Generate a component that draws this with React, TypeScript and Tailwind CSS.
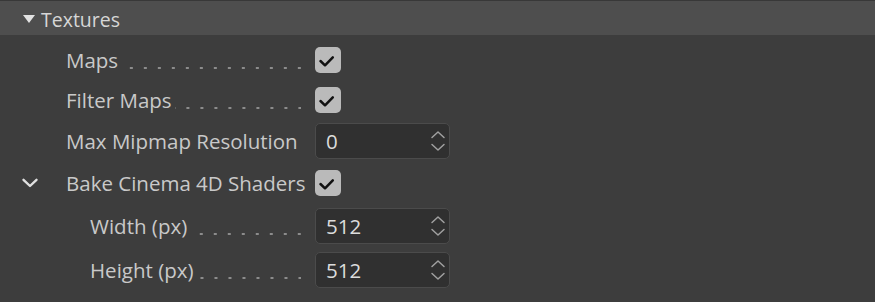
import React from "react";

type Row = {
  kind: "check" | "number";
  label: string;
  value?: string;
  indent?: boolean;
  chevron?: boolean;
  dots?: boolean;
  h: string;
};

const rows: Row[] = [
  { kind: "check", label: "Maps", dots: true, h: "h-[40px]" },
  { kind: "check", label: "Filter Maps", dots: true, h: "h-[40px]" },
  { kind: "number", label: "Max Mipmap Resolution", value: "0", h: "h-[42px]" },
  { kind: "check", label: "Bake Cinema 4D Shaders", chevron: true, h: "h-[42px]" },
  { kind: "number", label: "Width (px)", value: "512", indent: true, dots: true, h: "h-[44px]" },
  { kind: "number", label: "Height (px)", value: "512", indent: true, dots: true, h: "h-[44px]" },
];

function Checkbox() {
  return (
    <div className="w-[26px] h-[26px] rounded-[5px] bg-[#bababa]">
      <svg width="26" height="26" viewBox="0 0 26 26" fill="none">
        <path d="M5.5 14 L10 18.3 L17.8 10.3" stroke="#111" strokeWidth="2.5" strokeLinecap="round" strokeLinejoin="round" />
      </svg>
    </div>
  );
}

function NumberField({ value }: { value?: string }) {
  return (
    <div className="w-[135px] h-[36px] rounded-[5px] border border-[#4b4b4b] bg-[#303030] flex items-center justify-between pl-[10px] pr-[3px]">
      <span className="text-[20.5px] leading-none text-[#dcdcdc]">{value}</span>
      <svg width="16" height="22" viewBox="0 0 16 22" fill="none">
        <path d="M2 7.5 L8 2 L14 7.5" stroke="#a0a0a0" strokeWidth="1.5" strokeLinecap="round" strokeLinejoin="round" />
        <path d="M2 14.5 L8 20 L14 14.5" stroke="#a0a0a0" strokeWidth="1.5" strokeLinecap="round" strokeLinejoin="round" />
      </svg>
    </div>
  );
}

export default function App() {
  return (
    <div className="w-[875px] h-[302px] bg-[#3d3d3d] overflow-hidden font-['Open_Sans','Noto_Sans',sans-serif]">
      {/* header */}
      <div className="h-[35px] bg-[#4e4e4e] border-t border-[#383838] flex items-center pl-[23px]">
        <svg width="12" height="8" viewBox="0 0 12 8" className="mr-[6px] mt-[1px]">
          <path d="M0 0 L12 0 L6 8 Z" fill="#e2e2e2" />
        </svg>
        <span className="text-[19.5px] text-[#d6d6d6] leading-none mt-[3px]">Textures</span>
      </div>

      {/* rows */}
      <div className="pt-[5px] flex flex-col">
        {rows.map((r) => (
          <div key={r.label} className={`${r.h} flex items-center`}>
            <div className="w-[66px] shrink-0 pl-[21px]">
              {r.chevron && (
                <svg width="18" height="10" viewBox="0 0 18 10" fill="none">
                  <path d="M2.5 1.8 L9 8 L15.5 1.8" stroke="#e0e0e0" strokeWidth="2.4" strokeLinecap="round" strokeLinejoin="round" />
                </svg>
              )}
            </div>
            <div className={`w-[235px] shrink-0 flex items-center ${r.indent ? "pl-[24px]" : ""}`}>
              <span className="text-[20.5px] leading-none text-[#c9c9c9] whitespace-nowrap">{r.label}</span>
              {r.dots && (
                <span className="flex-1 ml-[3px] mt-[15px] h-[2px] bg-[linear-gradient(to_right,transparent_11px,#8c8c8c_11px)] bg-[length:14px_2px] bg-repeat-x bg-right" />
              )}
            </div>
            <div className="ml-[14px]">
              {r.kind === "check" ? <Checkbox /> : <NumberField value={r.value} />}
            </div>
          </div>
        ))}
      </div>
    </div>
  );
}
